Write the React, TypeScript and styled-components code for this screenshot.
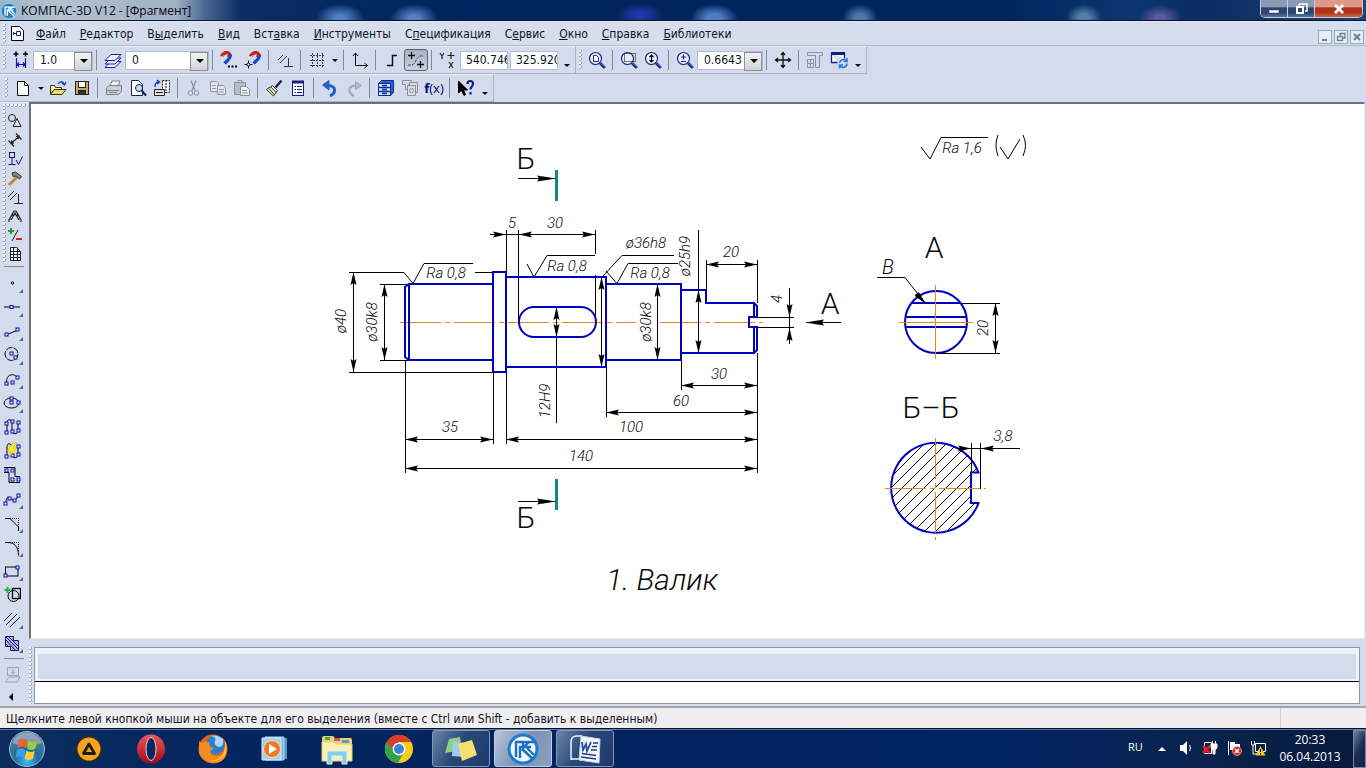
import React from "react";
import styled, { createGlobalStyle, css } from "styled-components";

const UI = `"DejaVu Sans Condensed", "DejaVu Sans", "Noto Sans", sans-serif`;
const SEGOE = `"Open Sans", "Noto Sans", sans-serif`;
const GOST = `Roboto, "Liberation Sans", sans-serif`;

const NAVY = "#00006e";
const BLUE = "#0000c0";
const ORANGE = "#dc8c1c";

const Global = createGlobalStyle`
  * { box-sizing: border-box; }
  body { margin: 0; background: #d3dbec; font-family: ${UI}; font-size: 12px; color: #10141c; }
  button, input, select { font: inherit; color: inherit; margin: 0; padding: 0; border: 0; background: none; border-radius: 0; outline: none; }
  svg { display: block; }
`;

/* ---------- window frame ---------- */

const Screen = styled.div`
  display: flex;
  flex-direction: column;
  height: 100vh;
  overflow: hidden;
`;

const TitleBar = styled.header`
  flex: none;
  display: flex;
  align-items: flex-start;
  height: 22px;
  padding-right: 3px;
  border-bottom: 1px solid #dfe8f6;
  box-shadow: inset 0 -1px #0a1226;
  background:
    linear-gradient(90deg, #9db4c9 0, #b3c2d0 60px, rgba(168, 184, 202, 0.95) 175px, rgba(110, 140, 178, 0.6) 205px, transparent 240px),
    radial-gradient(ellipse 24px 14px at 340px 18px, #4f81c6 20%, transparent 100%),
    radial-gradient(ellipse 24px 14px at 414px 18px, #5580c2 20%, transparent 100%),
    radial-gradient(ellipse 24px 12px at 640px 15px, #2436a8 20%, transparent 100%),
    radial-gradient(ellipse 24px 14px at 714px 18px, #4c7cc4 30%, transparent 100%),
    radial-gradient(ellipse 18px 14px at 860px 18px, #4e78a8 30%, transparent 100%),
    radial-gradient(ellipse 18px 14px at 1084px 18px, #4e7fa8 30%, transparent 100%),
    radial-gradient(ellipse 22px 13px at 1160px 18px, #5d5aa4 20%, transparent 100%),
    linear-gradient(90deg, #1d4270 0, #0a2c63 260px, #02245e 460px, #02245c 1000px, #0d3570 1130px, #0a2c62 1200px, #24426f 100%);
`;

const TitleText = styled.h1`
  flex: 1;
  display: flex;
  align-items: center;
  gap: 3px;
  height: 21px;
  margin: 0;
  font: 400 12px/20px ${SEGOE};
  color: #05070c;
`;

const CaptionGroup = styled.div`
  display: flex;
  height: 18px;
  border: 1px solid #c2cddd;
  border-top: 0;
  border-radius: 0 0 5px 5px;
  overflow: hidden;
`;

const CaptionButton = styled.button<{ $close?: boolean }>`
  display: flex;
  align-items: center;
  justify-content: center;
  width: ${(p) => (p.$close ? 47 : 27)}px;
  border-right: ${(p) => (p.$close ? 0 : 1)}px solid #c2cddd;
  background: ${(p) =>
    p.$close
      ? "linear-gradient(#dd9a8c 0 40%, #bc2f14 46%, #a9301c 70%, #d2644a)"
      : "linear-gradient(#8b9ab5 0 40%, #31476f 46%, #2b4672 75%, #57759f)"};
`;

const MenuBar = styled.nav`
  flex: none;
  display: flex;
  align-items: center;
  height: 24px;
  padding: 0 2px 0 0;
  background: #d6deee;
  border-bottom: 1px solid #b3b9c6;
`;

const MenuList = styled.div`
  flex: 1;
  display: flex;
  gap: 14px;
  padding-left: 12px;
`;

const MenuItem = styled.button`
  line-height: 22px;
  white-space: nowrap;
`;

const DocButtons = styled.div`
  display: flex;
  gap: 2px;
  padding-top: 6px;
`;

const DocButton = styled.button`
  width: 14px;
  height: 14px;
  border: 1px solid #93a9ba;
  background: #e6eef6;
`;

/* ---------- toolbars ---------- */

const ToolRow = styled.div`
  flex: none;
  display: flex;
  height: 28px;
`;

const Toolbar = styled.div<{ $wide?: boolean }>`
  display: flex;
  align-items: center;
  padding: 0 1px 0 ${(p) => (p.$wide ? 2 : 0)}px;
  border: 1px solid #e9eef7;
  border-right-color: #aeb5c3;
  border-bottom-color: #aeb5c3;
  border-left: 0;
`;

const Grip = styled.span<{ $row?: boolean }>`
  flex: none;
  ${(p) =>
    p.$row
      ? css`width: 24px; height: 3px; margin-left: 2px;`
      : css`width: 3px; height: 20px; margin: 0 3px;`}
  background-image: radial-gradient(circle at 1px 1px, #f6f8fc 1px, #9aa5ba 1px 2px, transparent 2px);
  background-size: 4px 4px;
`;

const Tool = styled.button<{ $pressed?: boolean }>`
  flex: none;
  display: flex;
  align-items: center;
  justify-content: center;
  width: 24px;
  height: 22px;
  ${(p) =>
    p.$pressed &&
    css`
      border: 1px solid #5c6473;
      border-radius: 3px;
      background: linear-gradient(#aab2c2, #c9d0de);
    `}
`;

const Caret = styled.button<{ $low?: boolean }>`
  display: flex;
  justify-content: center;
  align-items: center;
  width: ${(p) => (p.$low ? 14 : 11)}px;
  height: 20px;
  padding-top: ${(p) => (p.$low ? 10 : 0)}px;
  &::after {
    content: "";
    border: 3px solid transparent;
    border-top-color: #05070c;
    border-bottom: 0;
  }
`;

const Sep = styled.span`
  flex: none;
  width: 1px;
  height: 20px;
  margin: 0 4px 0 3px;
  background: #8089a0;
`;

const ComboWrap = styled.label<{ $w: number }>`
  position: relative;
  display: block;
  width: ${(p) => p.$w}px;
  height: 19px;
  border: 1px solid #b4bccb;
  background: #fff;
  select {
    appearance: none;
    width: 100%;
    height: 17px;
    padding-left: 6px;
    font: 400 12px/17px ${UI};
  }
  &::after {
    content: "";
    position: absolute;
    right: 4px;
    top: 7px;
    border: 4px solid transparent;
    border-top-color: #000;
    border-bottom: 0;
    pointer-events: none;
  }
  &::before {
    content: "";
    position: absolute;
    right: 0;
    top: 0;
    width: 16px;
    height: 17px;
    border: 1px solid #8a8f98;
    background: linear-gradient(#f4f4f4, #cfd2d6);
    pointer-events: none;
  }
`;

const CoordInput = styled.input`
  width: 48px;
  height: 19px;
  margin-right: 2px;
  padding-left: 5px;
  border: 1px solid #b4bccb;
  background: #fff;
  font: 400 12px/17px ${UI};
`;

const Fx = styled.span`
  font: 400 13px/20px ${SEGOE};
  color: ${NAVY};
  b { font-weight: 700; }
`;

/* ---------- body ---------- */

const Body = styled.div`
  flex: 1;
  min-height: 0;
  display: flex;
`;

const SideBar = styled.aside`
  flex: none;
  display: flex;
  flex-direction: column;
  align-items: flex-start;
  width: 29px;
  padding: 1px 2px 0 1px;
  border-top: 1px solid #eef2f9;
`;

const SideGroup = styled.div<{ $panel?: boolean }>`
  display: flex;
  flex-direction: column;
  ${(p) =>
    p.$panel &&
    css`
      margin-left: 2px;
      padding: 4px 0 0 1px;
      background: radial-gradient(circle at 1px 1px, #f6f8fc 1px, #9aa5ba 1px 2px, transparent 2px) 0 0 / 4px 4px repeat-y;
    `}
`;

const SideTool = styled.button<{ $tall?: boolean }>`
  position: relative;
  display: flex;
  align-items: center;
  justify-content: center;
  width: 22px;
  height: ${(p) => (p.$tall ? 24 : 19)}px;
`;

const Corner = styled.span`
  position: absolute;
  right: 0;
  bottom: 2px;
  border-left: 4px solid transparent;
  border-bottom: 4px solid #5d6678;
`;

const SideSep = styled.span`
  width: 20px;
  height: 1px;
  margin: 3px 0 4px 3px;
  background: #7e889c;
`;

const Work = styled.div`
  flex: 1;
  min-width: 0;
  display: flex;
  flex-direction: column;
`;

const Canvas = styled.main`
  flex: 1;
  min-height: 0;
  overflow: hidden;
  margin-right: 1px;
  border-top: 2px solid #6f7078;
  border-left: 2px solid #6f7078;
  border-right: 1px solid #e3e7ef;
  border-bottom: 1px solid #e3e7ef;
  background: #fff;
`;

const PropPanel = styled.section`
  flex: none;
  display: flex;
  gap: 2px;
  padding: 8px 6px 2px 0;
`;

const PropGrip = styled.span`
  width: 3px;
  background: radial-gradient(circle at 1px 1px, #f6f8fc 1px, #9aa5ba 1px 2px, transparent 2px) 0 0 / 4px 4px repeat-y;
`;

const PropBoxes = styled.div`
  flex: 1;
  border: 1px solid #8f95a1;
`;

const PropArea = styled.div`
  height: 33px;
  border: 3px solid #eef1f8;
  border-top-width: 6px;
  border-bottom-width: 2px;
  background: #d3dbec;
`;

const PropField = styled.input`
  display: block;
  width: 100%;
  height: 22px;
  border-top: 1px solid #000;
  background: #fff;
`;

const StatusBar = styled.footer`
  flex: none;
  display: flex;
  height: 22px;
  border-top: 2px solid #a3a6ae;
  background: #f0eeee;
  line-height: 22px;
  white-space: nowrap;
`;

const StatusText = styled.span`
  flex: 1;
  padding-left: 6px;
`;

const StatusCell = styled.span`
  width: 86px;
  border-left: 1px solid #d3d0d0;
`;

/* ---------- taskbar ---------- */

const TaskBar = styled.div`
  flex: none;
  display: flex;
  align-items: stretch;
  height: 40px;
  border-top: 1px solid #0a1020;
  box-shadow: inset 0 1px #5c7ba8;
  background: linear-gradient(90deg, #0b2e5e 0, #04265e 200px, #02235e 700px, #022463 1000px, #08244e 1200px, #07193a 100%);
`;

const TaskItem = styled.button<{ $state?: "start" | "open" | "active" }>`
  display: flex;
  align-items: center;
  justify-content: center;
  width: ${(p) => (p.$state === "start" ? 54 : 58)}px;
  margin: 1px 2px;
  ${(p) =>
    p.$state === "start" &&
    css`
      margin: 1px 4px 1px 0;
    `}
  border-radius: 3px;
  ${(p) =>
    p.$state === "open" &&
    css`
      border: 1px solid #8297b8;
      background: linear-gradient(120deg, #6c84a8, #2a4878 45%, #1c3a6c);
    `}
  ${(p) =>
    p.$state === "active" &&
    css`
      border: 1px solid #c3d0e2;
      background: linear-gradient(120deg, #b9c6da, #7d93b5 50%, #8ba0bf);
    `}
`;

const Tray = styled.div`
  display: flex;
  align-items: center;
  margin-left: auto;
  padding: 0 3px 2px 0;
  color: #fff;
  font: 400 12px/17px ${SEGOE};
`;

const Lang = styled.span`
  width: 22px;
  padding-bottom: 3px;
  font-size: 11px;
`;

const TrayIcon = styled.button`
  display: flex;
  justify-content: center;
  width: 24px;
`;

const Clock = styled.time`
  width: 80px;
  text-align: center;
`;

const ShowDesktop = styled.button`
  width: 13px;
  margin-top: 1px;
  border: 1px solid #7188ac;
  background: linear-gradient(120deg, #6b7f9f, #1c2f52 50%, #12213f);
`;

/* ---------- icon drawings ---------- */

const Ic = ({ children, c = "#000", w = 18, f = "none" }: { children: React.ReactNode; c?: string; w?: number; f?: string }) => (
  <svg width={w} height={w} viewBox="0 0 18 18" fill={f} stroke={c} strokeWidth={1} aria-hidden="true">
    {children}
  </svg>
);

const Nodes = ({ at }: { at: [number, number][] }) => (
  <>
    {at.map(([x, y]) => (
      <rect key={`${x}-${y}`} x={x - 1.5} y={y - 1.5} width={3} height={3} fill="#dfe6f5" stroke="#1010b4" strokeWidth={1} />
    ))}
  </>
);

const Magnet = ({ x = 0 }: { x?: number }) => (
  <g transform={`translate(${x} 0)`} fill="none">
    <path d="M1.500 5.500C5 -.5 12 1 8.500 6.500" stroke="#cc1f1f" strokeWidth={3.4} />
    <path d="M10.500 3.500C11 7 8 9 4.500 12.500" stroke="#2046c8" strokeWidth={3.2} />
    <path d="M1 7l2.500-2.500M3 12.500l2.500 1.500" stroke="#dfe6f5" strokeWidth={1} />
  </g>
);

const Lens = ({ children }: { children?: React.ReactNode }) => (
  <>
    <circle cx="7.500" cy="7.500" r="6" fill="#eaf0fb" stroke="#1c2a86" strokeWidth={1.2} />
    <path d="M12 12l5 5" stroke="#2b4fae" strokeWidth={3} />
    <path d="M11.500 12.500l4.500 4.500" stroke="#101a60" />
    {children}
  </>
);

const icons = {
  snapStep: (
    <Ic c={NAVY}>
      <path d="M4 .5v5M1.500 3h5M13.500 .5v5M11 3h5" stroke="#000" strokeWidth={1.5} />
      <path d="M4.500 7v10M13.500 7v10M5 13.500h8M7 11.500l-2 2 2 2M11 11.500l2 2-2 2" stroke="#1414b4" strokeWidth={1.2} />
    </Ic>
  ),
  layers: (
    <Ic c="#1c1ca8" f="#eef2fb">
      <path d="M1 16.500h10l6-6H7z" /><path d="M1 13h10l6-6H7z" /><path d="M1 9.500h10l6-6H7z" />
    </Ic>
  ),
  magnetDots: <Ic><Magnet /><path d="M8 15.500h2M11.500 15.500h2M15 15.500h2" strokeWidth={2} /></Ic>,
  magnetPoint: <Ic><Magnet x={5} /><path d="M4.500 9.500v8M0.500 13.500h8" /><circle cx="4.500" cy="13.500" r="1.500" fill="#fff" /></Ic>,
  ortho: <Ic c="#333"><path d="M2 9l5-5M4 12l7-7M12.500 7v8M8 15.500h9" /></Ic>,
  grid: <Ic c="#3a3f4a"><path d="M4.500 2v14M9.500 2v14M14.500 2v14M2 4.500h15M2 9.500h15M2 14.500h15" strokeDasharray="2 1" /></Ic>,
  axes: <Ic c="#111"><path d="M4.500 2v12.500h12M2 5l2.500-3L7 5M13.500 12l3 2.500-3 2.500" /></Ic>,
  step: <Ic c="#111"><path d="M4 14.500h5.500v-10H14" strokeWidth={1.5} /></Ic>,
  curvePt: <Ic c="#111"><path d="M4.500 1v7M1 4.500h7M13.500 10v7M10 13.500h7" strokeWidth={1.3} /><path d="M1 14h4c4-1 4-8 8-9h4" stroke="#2b4fae" strokeDasharray="3 1" /></Ic>,
  yx: <Ic c="#222"><path d="M1 2l2 3 2-3M3 5v3M12 1v7M8.500 4.500h7M10 11l4 6M14 11l-4 6" strokeWidth={1.2} /></Ic>,
  zoomDoc: <Ic><Lens><path d="M5.500 4.500h3l2 2v4h-5z" fill="#fff" stroke="#1c2a86" /></Lens></Ic>,
  zoomArea: <Ic><Lens><rect x="4.500" y="2.500" width="11" height="8" strokeDasharray="1 1" fill="none" /></Lens></Ic>,
  zoomY: <Ic><Lens><path d="M7.500 4v7M5.500 6l2-2 2 2M5.500 9l2 2 2-2" strokeWidth={1.2} /></Lens></Ic>,
  zoomPM: <Ic><Lens><path d="M7.500 3.500v5M5 6h5M5 10.500h5" stroke="#1c2a86" strokeWidth={1.2} /></Lens></Ic>,
  pan: <Ic c="#111"><path d="M9 1.500v15M1.500 9h15M7 4l2-2.500L11 4M7 14l2 2.500 2-2.500M4 7L1.500 9 4 11M14 7l2.500 2-2.500 2" strokeWidth={1.3} /></Ic>,
  redraw: <Ic c="#8b919e"><path d="M1.500 1.500h15v3h-3v12h-4v-12h-8zM1.500 8.500h6v8h-6zM1.500 12.500h6M4.500 8.500v8" /></Ic>,
  refresh: <Ic c="#15207e"><path d="M1.500 2.500h13v5M1.500 2.500v9h6" fill="#fff" strokeWidth={1.3} /><path d="M1 2.500h14" strokeWidth={3} /><path d="M9.500 12a4 4 0 017-2M17 12.500a4 4 0 01-7 2.500M17 7v3.500H13.500M9.500 17.500V14H13" stroke="#2a78d8" strokeWidth={1.6} /></Ic>,
  newDoc: <Ic c="#111" f="#fff"><path d="M3.500 2.500h7l4 4v10h-11z" /><path d="M10.500 2.500v4h4" fill="none" /></Ic>,
  open: <Ic c="#3a3410"><path d="M1.500 15.500v-9h4l1 2h6v2" fill="#fff6b0" /><path d="M1.500 15.500l3.500-5h12l-4 5z" fill="#e8d873" /><path d="M9 5c2-3 5-3 6 0M13 4l2.500 2L17 3" stroke="#1a3fb4" strokeWidth={1.3} /></Ic>,
  save: <Ic c="#222"><rect x="2.500" y="2.500" width="13" height="13" fill="#c8a85a" /><rect x="5.500" y="2.500" width="7" height="6" fill="#fff" /><rect x="5.500" y="11.500" width="7" height="4" fill="#333" /></Ic>,
  print: <Ic c="#7d828d" f="#c9ced9"><path d="M5 7l2-5h8l-2 5" fill="#eef0f5" /><path d="M1.500 8.500l3-2h12v6l-3 3h-12z" /><path d="M2 11.500h12M4 13.500h8" /></Ic>,
  preview: <Ic c="#1b2350"><path d="M2.500 1.500h7l4 4v11h-11z" fill="#fff" /><circle cx="10" cy="9" r="3.500" fill="#c7e0f6" /><path d="M12.500 11.500l4.500 5" strokeWidth={2.2} /></Ic>,
  pages: <Ic c="#222"><path d="M9.500 1.500h7v12h-7zM13 1v13" fill="#f2f4f8" strokeDasharray="2 1" /><path d="M1.500 10.500h10v6h-10z" fill="#e3e3e3" /><path d="M3 13.500h7" /><path d="M2 8c0-4 1-5 4-5M4 1l2.500 2L4 5" stroke="#1a3fb4" strokeWidth={1.5} /></Ic>,
  cut: <Ic c="#8b919e"><path d="M6 1.500l4 10M11 1.500l-4 10" strokeWidth={1.3} /><circle cx="5.500" cy="14" r="2.300" /><circle cx="11.500" cy="14" r="2.300" /></Ic>,
  copy: <Ic c="#9095a1" f="#e3e7ef"><path d="M1.500 2.500h6l2 2v8h-8z" /><path d="M8.500 6.500h6l2 2v7h-8z" /><path d="M3 6.500h4M3 9.500h4M10 10.500h5M10 13h5" /></Ic>,
  paste: <Ic c="#8b919e"><rect x="1.500" y="3.500" width="11" height="12" fill="#b9beca" /><path d="M5 3.500v-2h4v2" /><path d="M7.500 7.500h6l3 3v6h-9z" fill="#eef0f5" /><path d="M9 11.500h5M9 14h6" /></Ic>,
  brush: <Ic c="#1b2350"><path d="M16.500 1.500l-6 7" strokeWidth={2.4} /><path d="M1.500 10.500l6-4 5 5-4 5.500z" fill="#f0e8b8" stroke="#333" /><path d="M4 9.500l5 6M6 8l5 5.500" stroke="#333" /></Ic>,
  props: <Ic c="#15207e"><rect x="3.500" y="2.500" width="11" height="14" fill="#fff" /><path d="M3 3h12" strokeWidth={3} /><path d="M5.500 7.500h1.500M8 7.500h5M5.500 10.500h1.500M8 10.500h5M5.500 13.500h1.500M8 13.500h5" /></Ic>,
  undo: <Ic c="#2360c8"><path d="M9 17c6-3 7-10-2-10.500" strokeWidth={3} /><path d="M8 1.500v9.500L1.500 6z" fill="#2360c8" /></Ic>,
  redo: <Ic c="#9ea4b1"><path d="M9 17c-6-3-7-10 2-10.500" strokeWidth={2} /><path d="M10.500 2.500v8l6-4z" fill="#b4bac6" /></Ic>,
  manager: <Ic c="#0a2c9c"><path d="M1.500 4.500l3-3h12v12l-3 3h-12z" fill="#2a62c4" /><rect x="1.500" y="4.500" width="12" height="12" fill="#d8eafc" /><path d="M1.500 8.500h12M1.500 12.500h12M5 6.500h5M5 10.500h5M5 14.500h5" strokeWidth={1.3} /></Ic>,
  vars: <Ic c="#8b8f98" f="#d9dce4"><path d="M1.500 1.500h9v4h-3v5h-3v-5h-3z" /><path d="M8.500 3.500h8v10h-8z" /><path d="M6.500 6.500h8v10h-8z" /><circle cx="10.500" cy="11.500" r="2" /></Ic>,
  help: <Ic c="#000"><path d="M1.500 2v12l3-2.500 2.500 5 1.500-1-2-4.500h4z" fill="#000" /><path d="M10.500 5c0-4 6-4 5.500 0 0 2.500-2.500 2.500-2.500 5.500M13.500 13v2.500" stroke="#15207e" strokeWidth={2.2} /></Ic>,
};

const ToolBtn = ({ label, icon, pressed }: { label: string; icon: keyof typeof icons; pressed?: boolean }) => (
  <Tool type="button" aria-label={label} $pressed={pressed}>{icons[icon]}</Tool>
);

const Combo = ({ label, value, w }: { label: string; value: string; w: number }) => (
  <ComboWrap $w={w}>
    <select aria-label={label} defaultValue={value}><option>{value}</option></select>
  </ComboWrap>
);

/* compact panel: groups of commands */
const panelIcons: [string, React.ReactNode][] = [
  ["Геометрия", <Ic c="#222"><circle cx="6" cy="6" r="3.500" /><path d="M7 14.500h8l-4-8z" /></Ic>],
  ["Размеры", <Ic c="#222"><path d="M5.500 12l7-6M2.500 9.500l5.500 6M10 2.500l5.500 6M8 12l-3 .5 1-3M10 5.500l3-.5-1 3" strokeWidth={1.2} /></Ic>],
  ["Обозначения", <Ic c="#15155c"><rect x="3.500" y="2.500" width="5" height="5" /><path d="M6 8v6M2.500 14.500h7M10 10l2.500 4.500 4-8" /></Ic>],
  ["Редактирование", <Ic c="#6b4a10"><path d="M3 16l8-8" stroke="#c08a2c" strokeWidth={3} /><path d="M6 4l3.500-1 6 4.500-2 2.500-3.500-3-3 .5z" fill="#8f8a80" stroke="#333" /></Ic>],
  ["Параметризация", <Ic c="#222"><path d="M2 9l6-6M4 12l7-7M12.500 6v9M8 15.500h9" /></Ic>],
  ["Измерения", <Ic c="#222"><path d="M3 15v-2l5-9h2l5 9v2M5 13l4-7 4 7M6 8.500c2-1 4-1 6 0" strokeWidth={1.2} /></Ic>],
  ["Выделение", <Ic><path d="M5 2v6M2 5h6" stroke="#13a03a" strokeWidth={2} /><path d="M6 15l6-11" stroke="#222" /><path d="M10 13h6" stroke="#d8202a" strokeWidth={2} /></Ic>],
  ["Спецификация", <Ic c="#222"><path d="M4.500 2.500h6l4 4v9h-10zM4.500 6.500h10M4.500 9.500h10M4.500 12.500h10M7.500 2.500v13M11.500 2.500v13" fill="#f2f4f8" /></Ic>],
];

const geometryIcons: [string, React.ReactNode, boolean][] = [
  ["Точка", <Ic><circle cx="9.500" cy="9" r="1.200" /></Ic>, true],
  ["Вспомогательная прямая", <Ic><path d="M1 9h16" /><Nodes at={[[8.5, 9]]} /></Ic>, true],
  ["Отрезок", <Ic><path d="M3 13L15 8" /><Nodes at={[[3.5, 12.5], [14.5, 7.5]]} /></Ic>, true],
  ["Окружность", <Ic><circle cx="8.500" cy="8" r="6.500" strokeDasharray="7 1" /><Nodes at={[[8.5, 7.5], [12.5, 11.5]]} /></Ic>, true],
  ["Дуга", <Ic><path d="M3.500 13C3 3 12 3 14.500 8" /><Nodes at={[[3.5, 13.5], [9.5, 12.5], [14.5, 7.5]]} /></Ic>, true],
  ["Эллипс", <Ic><ellipse cx="8.500" cy="9" rx="7.500" ry="5" /><Nodes at={[[8.5, 8.5], [8.5, 4.5], [15.5, 8.5]]} /></Ic>, true],
  ["Непрерывный ввод", <Ic><path d="M4 14V5C4 0 9 1 9 6v6c0 5 6 5 6 0V5" /><Nodes at={[[3.5, 14.5], [3.5, 5.5], [9.5, 3.5], [9.5, 13.5], [15.5, 4.5], [15.5, 12.5]]} /></Ic>, false],
  ["Линия", <Ic><path d="M4 14V5C4 0 9 1 9 6v6c0 5 6 5 6 0V5" /><Nodes at={[[3.5, 14.5], [9.5, 13.5], [15.5, 4.5], [15.5, 12.5]]} /><path d="M10 1L4 9h4l-2 6 8-9h-4l4-5z" fill="#ffee10" stroke="#b8a400" strokeWidth={0.5} /></Ic>, false],
  ["Мультилиния", <Ic><path d="M1 1.500h11v9H17M1 6.500h5v10H17" /><Nodes at={[[3.5, 4.5], [9.5, 4.5], [9.5, 13.5], [15.5, 13.5]]} /></Ic>, false],
  ["Кривая Безье", <Ic><path d="M3 13C3 5 7 7 9 9.500S14 10 15 5" /><Nodes at={[[2.5, 13.5], [6.5, 8.5], [11.5, 10.5], [15.5, 5.5]]} /></Ic>, true],
  ["Фаска", <Ic><path d="M2 4.500h5L15.500 13v4" /><path d="M7 4.500h8.500v9" strokeDasharray="1 1" /></Ic>, true],
  ["Скругление", <Ic><path d="M2 4.500h3c6 0 10.500 4 10.500 13" /><path d="M7 4.500h8.500v9" strokeDasharray="1 1" /></Ic>, true],
  ["Прямоугольник", <Ic><rect x="2.500" y="5" width="12.500" height="9" /><Nodes at={[[2.5, 13.5], [14.5, 5.5]]} /></Ic>, true],
  ["Собрать контур", <Ic><rect x="9.500" y="2.500" width="8" height="10" strokeWidth={1.3} /><circle cx="10.500" cy="10" r="5.500" /><path d="M4.500 1v6M1.500 4h6" stroke="#17b43a" strokeWidth={2} /></Ic>, false],
  ["Эквидистанта", <Ic c="#15155c"><path d="M1 11L9 3M3 15L14 4M7 17L17 7" /></Ic>, true],
  ["Штриховка", <Ic c="#15155c"><path d="M2.500 2.500h8v4h5v10h-8v-4h-5z" fill="#aab4e8" /><path d="M3 6l9 10M3 3l12 12M6 3l9 9M3 10l3 3" /></Ic>, true],
];

/* ---------- the technical drawing ---------- */

const DrawText = styled.text<{ $size?: number; $upright?: boolean }>`
  font-family: ${GOST};
  font-size: ${(p) => p.$size ?? 15}px;
  font-weight: 300;
  font-style: ${(p) => (p.$upright ? "normal" : "italic")};
  fill: #0c0c0c;
  text-anchor: middle;
`;

const angle = { r: 0, d: 90, l: 180, u: 270 };
const Arrow = ({ x, y, to, len = 13 }: { x: number; y: number; to: keyof typeof angle; len?: number }) => (
  <path d={`M0 0L${-len} -3L${-len + 2} 0L${-len} 3Z`} transform={`translate(${x} ${y}) rotate(${angle[to]})`} fill="#000" stroke="none" />
);

const HDim = ({ x1, x2, y }: { x1: number; x2: number; y: number }) => (
  <g><path d={`M${x1} ${y}H${x2}`} /><Arrow x={x1} y={y} to="l" /><Arrow x={x2} y={y} to="r" /></g>
);
const VDim = ({ x, y1, y2 }: { x: number; y1: number; y2: number }) => (
  <g><path d={`M${x} ${y1}V${y2}`} /><Arrow x={x} y={y1} to="u" /><Arrow x={x} y={y2} to="d" /></g>
);

const labels: [string, number, number][] = [
  ["5", 512, 228], ["30", 555, 228], ["Ra 0,8", 446, 278], ["Ra 0,8", 567, 271], ["Ra 0,8", 650, 278],
  ["ø36h8", 646, 248], ["20", 731, 257], ["35", 450, 432], ["100", 631, 432], ["60", 681, 406],
  ["30", 719, 379], ["140", 581, 461], ["Ra 1,6", 962, 153], ["3,8", 1003, 441],
];
const vLabels: [string, number, number][] = [
  ["ø40", 346, 321], ["ø30k8", 377, 322], ["12H9", 550, 401], ["ø30k8", 651, 322], ["ø25h9", 690, 256], ["4", 782, 299], ["20", 988, 328],
];

const hatch = Array.from({ length: 22 }, (_, i) => 795 + i * 11);

const Drawing = () => (
  <svg width="100%" height="100%" role="img" aria-label="Чертёж: валик">
    <defs>
      <clipPath id="section">
        <path d="M978.500 472.500A45 45 0 1 0 978.500 503H971V472.500Z" />
      </clipPath>
    </defs>
    <g transform="translate(-31 -104)" fill="none" stroke="#000" strokeWidth={1}>
      <path d="M400 322.500H636M660 322.500H763" stroke={ORANGE} strokeDasharray="41 4 5 4" />

      <path d="M349 272.500H404L413 283.500 424 263.500H473M475 272.500H493M349 372.500H493M380 284.500H408M380 360.500H408" />
      <path d="M405.500 361V473M493.500 372V444M506.500 367V444M506.500 230V277M518.500 230V322M595.500 230V254M595.500 275V322" />
      <path d="M527 264L534 277 547 255.500H595M602 277L622 255.500H674M606 271L617 283.500 628 263.500H678" />
      <path d="M606.500 367V417M681.500 360V390M757.500 260V303M757.500 353V473M706.500 260V290M698.500 230V290" />
      <path d="M757 317.500H794M757 327.500H794M789.500 288V344" />
      <path d="M490 234.500H518" />
      <Arrow x={506} y={234.5} to="r" />
      <HDim x1={519} x2={595} y={234.5} />
      <HDim x1={706} x2={757} y={264.5} />
      <HDim x1={681} x2={757} y={385.5} />
      <HDim x1={606} x2={757} y={412.5} />
      <HDim x1={506} x2={757} y={439.5} />
      <HDim x1={405} x2={493} y={439.5} />
      <HDim x1={405} x2={757} y={468.5} />
      <VDim x={353.5} y1={272} y2={372} />
      <VDim x={384.5} y1={284} y2={360} />
      <VDim x={601.5} y1={277} y2={367} />
      <VDim x={657.5} y1={284} y2={360} />
      <VDim x={698.5} y1={290} y2={353} />
      <VDim x={556.5} y1={307} y2={337} />
      <path d="M556.500 337V423" />
      <Arrow x={789.5} y={317} to="d" />
      <Arrow x={789.5} y={328} to="u" />

      <g stroke={BLUE} strokeWidth={2}>
        <path d="M493 284H409L405 287V357L409 360H493M409 284V360" />
        <rect x={493} y={272} width={13} height={100} />
        <path d="M506 277H606V367H506M606 284H681V360H606" />
        <rect x={519} y={307} width={77} height={30} rx={15} />
        <path d="M681 290H706V303H754L757 306V317H749V327H757V350L754 353H681M754 303V317M754 327V353" />
      </g>

      <path d="M518 178.500H556M518 501.500H556M806 322.500H841" />
      <Arrow x={556} y={178.5} to="r" len={19} />
      <Arrow x={556} y={501.5} to="r" len={19} />
      <Arrow x={805} y={322.5} to="l" len={19} />
      <path d="M556.500 170V201M556.500 479V510" stroke="#0f8a8a" strokeWidth={3} />

      <path d="M921 147L930 159 941 137.500H988M1000 147L1008 159 1020 139M998 135Q994 145 998 156M1023 135Q1028 145 1023 156" />

      <path d="M935 303.500H1000M935 353.500H1000" />
      <g stroke={BLUE} strokeWidth={2}>
        <circle cx={936} cy={322} r={31} />
        <path d="M911 303H961M905 317H967M905 327H967" />
      </g>
      <path d="M899 322.500H973M935.500 285V359" stroke={ORANGE} />
      <path d="M877 277.500H905L925 303" />
      <path d="M925 303L915 295.500 918.500 292.500Z" fill="#000" />
      <VDim x={995.5} y1={303} y2={353} />

      <g clipPath="url(#section)">
        {hatch.map((x) => <path key={x} d={`M${x} 540L${x + 104} 436`} />)}
      </g>
      <path d="M978.500 472.500A45 45 0 1 0 978.500 503H971V472.500Z" stroke={BLUE} strokeWidth={2} />
      <path d="M885 488.500H986M935.500 438V540" stroke={ORANGE} strokeDasharray="41 4 5 4" />
      <path d="M957 448.500H1020M971.500 443V473M980.500 443V489" />
      <Arrow x={971} y={448.5} to="r" />
      <Arrow x={981} y={448.5} to="l" />
    </g>
    <g transform="translate(-31 -104)">
      {labels.map(([t, x, y]) => <DrawText key={`${t}${x}`} x={x} y={y}>{t}</DrawText>)}
      {vLabels.map(([t, x, y]) => <DrawText key={`${t}${x}`} transform={`translate(${x} ${y}) rotate(-90)`}>{t}</DrawText>)}
      <DrawText x={888} y={274} $size={20}>B</DrawText>
      <DrawText x={830} y={314} $size={30} $upright>А</DrawText>
      <DrawText x={934} y={258} $size={30} $upright>А</DrawText>
      <DrawText x={526} y={169} $size={30} $upright>Б</DrawText>
      <DrawText x={526} y={528} $size={30} $upright>Б</DrawText>
      <DrawText x={931} y={418} $size={30} $upright>Б–Б</DrawText>
      <DrawText x={662} y={590} $size={30}>1. Валик</DrawText>
    </g>
  </svg>
);

/* ---------- logos ---------- */

const Kompas = ({ size, light }: { size: number; light?: boolean }) => (
  <svg width={size} height={size} viewBox="0 0 32 32" aria-hidden="true">
    <circle cx="16" cy="16" r="14" fill={light ? "#f2f7fd" : "#1f7fcc"} stroke={light ? "#1c7bd0" : "#8cc4ee"} strokeWidth={light ? 3 : 2} />
    <g stroke={light ? "#1c6fc4" : "#fff"} strokeWidth="2.400" fill="none">
      <path d="M9 24V9h7v6l6-6h5M16 9h10" /><path d="M13 25V14h11M15 16l11 10M20 15l7 7" />
    </g>
  </svg>
);

const StartOrb = () => (
  <svg width="40" height="38" viewBox="0 0 40 38" aria-hidden="true">
    <defs>
      <radialGradient id="orb" cx="50%" cy="85%" r="75%"><stop offset="0" stopColor="#39c6ee" /><stop offset=".45" stopColor="#1c6aa4" /><stop offset="1" stopColor="#5d7f9c" /></radialGradient>
    </defs>
    <circle cx="20" cy="19" r="17.500" fill="url(#orb)" stroke="#9cb9d0" />
    <path d="M5 13a16 16 0 0130 0q-15 6-30 0z" fill="#fff" opacity=".3" />
    <path d="M12 10q4-3 8.500 0l-1.500 8q-4-3-8.500 0z" fill="#f0642c" />
    <path d="M21.500 10.500q4 3 9 0l-2 8q-4 3-8.500 0z" fill="#9ccc3c" />
    <path d="M10 20q4-3 8.500 0l-1.500 8q-4-3-8.500 0z" fill="#3c9ce8" />
    <path d="M19.500 20.500q4 3 8.500 0l-2 8q-4 3-8.500 0z" fill="#fccc3c" />
  </svg>
);

const taskIcons = {
  aimp: <svg width="28" height="28" viewBox="0 0 28 28"><circle cx="14" cy="14" r="12.500" fill="#f5a21c" stroke="#2a2a2a" strokeWidth="2" /><path d="M14 9L8.500 18.500h11z" fill="none" stroke="#1c1c1c" strokeWidth="2.800" strokeLinejoin="round" /></svg>,
  opera: <svg width="30" height="30" viewBox="0 0 30 30"><defs><linearGradient id="op" x2="0" y2="1"><stop offset="0" stopColor="#f0565a" /><stop offset="1" stopColor="#a00c14" /></linearGradient></defs><ellipse cx="15" cy="15" rx="14" ry="14.500" fill="url(#op)" /><ellipse cx="15" cy="15" rx="5" ry="11.500" fill="#052a60" stroke="#f6c9c9" /></svg>,
  firefox: <svg width="32" height="32" viewBox="0 0 32 32"><circle cx="16" cy="16" r="14.500" fill="#e8661c" /><circle cx="18" cy="12" r="9.500" fill="#2f7cc8" /><path d="M14 3q6 1 4 5t4 6q5 0 4-8Q20 1 14 3z" fill="#a9d8f6" /><path d="M2 8l3 2q4-3 8 0-2 2 1 4l3 1-4 3q1 6 8 5 6-1 7-9 4 10-5 15Q9 33 2 20z" fill="#f28c1e" /><path d="M28 8q4 9-1 15-6 7-15 5 10 0 14-7 3-6 2-13z" fill="#fcc83c" /></svg>,
  wmp: <svg width="30" height="28" viewBox="0 0 30 28"><path d="M8 3h19v21H8z" fill="#4f92cc" /><path d="M5 2h19v23H5z" fill="#7ab4e0" stroke="#b9dcf4" /><path d="M2 3h19v22H2z" fill="#a6cdea" stroke="#d8ecf8" /><circle cx="12" cy="14" r="8.500" fill="#ee7a24" stroke="#fbe0c4" /><path d="M9 9v10l8-5z" fill="#fff" /></svg>,
  explorer: <svg width="34" height="32" viewBox="0 0 34 32"><path d="M2 5q0-2 2-2h9l2 2h15q2 0 2 2v20H2z" fill="#e8cf78" /><path d="M5 4h5v3H5z" fill="#3cae4c" /><path d="M14 5h6v3h-6z" fill="#e05a4c" /><path d="M22 7h7v3h-7z" fill="#4c9ce0" /><path d="M2 9h12l2 2h16v17H2z" fill="#fbf0b4" stroke="#e8cf78" /><path d="M7 31V20q0-2 2-2h16q2 0 2 2v11h-5v-8H12v8z" fill="#86cdee" stroke="#d8f0fb" /></svg>,
  chrome: <svg width="30" height="30" viewBox="0 0 30 30"><circle cx="15" cy="15" r="14" fill="#f8cc1c" /><path d="M15 15L2.900 8A14 14 0 0127.100 8H15z" fill="#dc3c2c" /><path d="M15 15L2.900 8A14 14 0 0014 29l6-11z" fill="#2fa24a" /><path d="M15 8h12.100A14 14 0 002.900 8l6 8z" fill="#dc3c2c" /><circle cx="15" cy="15" r="6.500" fill="#fff" /><circle cx="15" cy="15" r="5" fill="#3a82dc" /></svg>,
  notes: <svg width="34" height="26" viewBox="0 0 34 26"><path d="M5 3l11-2 2 13-17 3z" fill="#8fd088" /><path d="M9 6l12 1-1 14-12-1z" fill="#9ccdf2" /><path d="M14 8l14-4 5 15-15 6z" fill="#f8e06c" /></svg>,
  word: <svg width="32" height="30" viewBox="0 0 32 30"><path d="M2 26V8q0-6 6-6h5" stroke="#eef4fc" strokeWidth="1.500" fill="none" /><path d="M2 25h8" stroke="#eef4fc" strokeWidth="1.500" /><path d="M12 2l19 3-1 24-20-3z" fill="#f2f6fc" stroke="#c2d4ea" /><path d="M13 8l1 8 3-6 1 7 4-9" stroke="#1d4f9e" strokeWidth="1.800" fill="none" /><path d="M24 9h5M23 12.500h5M22 16h6M13 19.500l14 2M12 23l15 2" stroke="#1d3f7e" strokeWidth="1.600" /></svg>,
};

const menus: [string, string, string][] = [
  ["", "Ф", "айл"], ["", "Р", "едактор"], ["В", "ы", "делить"], ["", "В", "ид"], ["Вст", "а", "вка"], ["", "И", "нструменты"],
  ["С", "п", "ецификация"], ["С", "е", "рвис"], ["", "О", "кно"], ["", "С", "правка"], ["", "Б", "иблиотеки"],
];

export default function App() {
  return (
    <Screen>
      <Global />
      <TitleBar>
        <TitleText><Kompas size={18} />КОМПАС-3D V12 - [Фрагмент]</TitleText>
        <CaptionGroup>
          <CaptionButton type="button" aria-label="Свернуть"><svg width="12" height="10"><path d="M1 6h10v3H1z" fill="#fff" stroke="#3a3f4a" strokeWidth=".5" /></svg></CaptionButton>
          <CaptionButton type="button" aria-label="Восстановить"><svg width="13" height="12"><path d="M4 1h8v7h-2M4 1v2" fill="none" stroke="#fff" strokeWidth="1.500" /><rect x="2" y="4" width="6" height="6" fill="none" stroke="#fff" strokeWidth="2" /></svg></CaptionButton>
          <CaptionButton type="button" $close aria-label="Закрыть"><svg width="12" height="10"><path d="M2 1l8 8M10 1l-8 8" stroke="#fff" strokeWidth="2.800" /></svg></CaptionButton>
        </CaptionGroup>
      </TitleBar>

      <MenuBar>
        <Grip />
        <svg width="15" height="17" viewBox="0 0 15 17" aria-hidden="true"><path d="M2.500 1.500h8l4 4v10h-12z" fill="#fff" stroke="#000" /><path d="M4 8.500h3M7.500 6.500h4v4h-4zM4.500 7v3" fill="none" stroke="#1414b4" /></svg>
        <MenuList>
          {menus.map(([a, u, b]) => <MenuItem type="button" key={u + b}>{a}<u>{u}</u>{b}</MenuItem>)}
        </MenuList>
        <DocButtons>
          <DocButton type="button" aria-label="Свернуть документ"><svg width="12" height="12"><path d="M3 9h5" stroke="#6b8396" strokeWidth="2" /></svg></DocButton>
          <DocButton type="button" aria-label="Восстановить документ"><svg width="12" height="12"><path d="M5 5V2.500h5V7H8M2.500 5.500h5v4h-5z" fill="none" stroke="#6b8396" strokeWidth="1.300" /></svg></DocButton>
          <DocButton type="button" aria-label="Закрыть документ"><svg width="12" height="12"><path d="M3 3l6 6M9 3l-6 6" stroke="#6b8396" strokeWidth="2" /></svg></DocButton>
        </DocButtons>
      </MenuBar>

      <ToolRow>
        <Toolbar>
          <Grip />
          <ToolBtn label="Шаг курсора" icon="snapStep" />
          <Combo label="Текущий шаг" value="1.0" w={60} />
          <Sep />
          <ToolBtn label="Слои" icon="layers" />
          <Combo label="Текущий слой" value="0" w={84} />
          <Sep />
          <ToolBtn label="Привязки" icon="magnetDots" />
          <ToolBtn label="Запретить привязки" icon="magnetPoint" />
          <Sep />
          <ToolBtn label="Параметрический режим" icon="ortho" />
          <Sep />
          <ToolBtn label="Сетка" icon="grid" />
          <Caret type="button" aria-label="Параметры сетки" />
          <Sep />
          <ToolBtn label="Система координат" icon="axes" />
          <Sep />
          <ToolBtn label="Ортогональное черчение" icon="step" />
          <ToolBtn label="Округление" icon="curvePt" pressed />
          <Sep />
          <ToolBtn label="Координаты" icon="yx" />
          <CoordInput aria-label="X" defaultValue="540.746" />
          <CoordInput aria-label="Y" defaultValue="325.920" />
          <Caret type="button" $low aria-label="Ещё" />
        </Toolbar>
        <Toolbar>
          <Grip />
          <ToolBtn label="Показать документ" icon="zoomDoc" />
          <Sep />
          <ToolBtn label="Увеличить рамкой" icon="zoomArea" />
          <ToolBtn label="Масштаб по высоте" icon="zoomY" />
          <Sep />
          <ToolBtn label="Приблизить" icon="zoomPM" />
          <Combo label="Масштаб" value="0.6643" w={66} />
          <Sep />
          <ToolBtn label="Сдвинуть" icon="pan" />
          <Sep />
          <ToolBtn label="Перестроить" icon="redraw" />
          <ToolBtn label="Обновить изображение" icon="refresh" />
          <Caret type="button" $low aria-label="Ещё" />
        </Toolbar>
      </ToolRow>

      <ToolRow>
        <Toolbar $wide>
          <Grip />
          <ToolBtn label="Создать" icon="newDoc" />
          <Caret type="button" aria-label="Тип документа" />
          <ToolBtn label="Открыть" icon="open" />
          <ToolBtn label="Сохранить" icon="save" />
          <Sep />
          <ToolBtn label="Печать" icon="print" />
          <ToolBtn label="Предварительный просмотр" icon="preview" />
          <ToolBtn label="Формат" icon="pages" />
          <Sep />
          <ToolBtn label="Вырезать" icon="cut" />
          <ToolBtn label="Копировать" icon="copy" />
          <ToolBtn label="Вставить" icon="paste" />
          <Sep />
          <ToolBtn label="Копировать свойства" icon="brush" />
          <ToolBtn label="Свойства" icon="props" />
          <Sep />
          <ToolBtn label="Отменить" icon="undo" />
          <ToolBtn label="Повторить" icon="redo" />
          <Sep />
          <ToolBtn label="Менеджер библиотек" icon="manager" />
          <ToolBtn label="Менеджер документа" icon="vars" />
          <Tool type="button" aria-label="Переменные"><Fx><b>f</b>(x)</Fx></Tool>
          <Sep />
          <ToolBtn label="Справка" icon="help" />
          <Caret type="button" $low aria-label="Ещё" />
        </Toolbar>
      </ToolRow>

      <Body>
        <SideBar>
          <Grip $row />
          <SideGroup $panel>
            {panelIcons.map(([label, icon]) => <SideTool type="button" key={label} aria-label={label}>{icon}</SideTool>)}
          </SideGroup>
          <SideSep />
          <SideGroup>
            {geometryIcons.map(([label, icon, more]) => (
              <SideTool type="button" $tall key={label} aria-label={label}>{icon}{more && <Corner />}</SideTool>
            ))}
          </SideGroup>
          <SideSep />
          <SideTool type="button" $tall aria-label="Библиотека">
            <Ic c="#9aa1b0"><path d="M4.500 1.500h11v8h-11zM10 3v5M8 6l2 2 2-2M3 15l3-4h11l-3 5H3z" /></Ic>
          </SideTool>
          <SideTool type="button" aria-label="Прокрутить"><svg width="8" height="8"><path d="M5 0v8L1 4z" fill="#000" /></svg></SideTool>
        </SideBar>
        <Work>
          <Canvas><Drawing /></Canvas>
          <PropPanel>
            <PropGrip />
            <PropBoxes>
              <PropArea />
              <PropField aria-label="Строка параметров" />
            </PropBoxes>
          </PropPanel>
        </Work>
      </Body>

      <StatusBar>
        <StatusText>Щелкните левой кнопкой мыши на объекте для его выделения (вместе с Ctrl или Shift - добавить к выделенным)</StatusText>
        <StatusCell />
      </StatusBar>

      <TaskBar>
        <TaskItem type="button" $state="start" aria-label="Пуск"><StartOrb /></TaskItem>
        <TaskItem type="button" aria-label="AIMP">{taskIcons.aimp}</TaskItem>
        <TaskItem type="button" aria-label="Opera">{taskIcons.opera}</TaskItem>
        <TaskItem type="button" aria-label="Firefox">{taskIcons.firefox}</TaskItem>
        <TaskItem type="button" aria-label="Проигрыватель">{taskIcons.wmp}</TaskItem>
        <TaskItem type="button" aria-label="Проводник">{taskIcons.explorer}</TaskItem>
        <TaskItem type="button" aria-label="Chrome">{taskIcons.chrome}</TaskItem>
        <TaskItem type="button" $state="open" aria-label="Записки">{taskIcons.notes}</TaskItem>
        <TaskItem type="button" $state="active" aria-label="КОМПАС-3D"><Kompas size={32} light /></TaskItem>
        <TaskItem type="button" $state="open" aria-label="Word">{taskIcons.word}</TaskItem>
        <Tray>
          <Lang>RU</Lang>
          <TrayIcon type="button" aria-label="Скрытые значки"><svg width="8" height="6"><path d="M0 6l4-4 4 4z" fill="#fff" /></svg></TrayIcon>
          <TrayIcon type="button" aria-label="Громкость"><svg width="14" height="14"><path d="M1 4h3l4-4v14l-4-4H1z" fill="#fff" /><path d="M10.500 4q2 3 0 6" stroke="#fff" fill="none" /></svg></TrayIcon>
          <TrayIcon type="button" aria-label="Питание"><svg width="16" height="16"><path d="M2.500 2.500h7v11h-7z" fill="none" stroke="#fff" /><path d="M9 4h6v4l-2 2v4h-2v-4L9 8zM10.500 1v3M13.500 1v3" fill="#fff" stroke="#fff" /><path d="M1 6l7 7M8 6l-7 7" stroke="#e01c1c" strokeWidth="2.500" /></svg></TrayIcon>
          <TrayIcon type="button" aria-label="Центр поддержки"><svg width="16" height="16"><path d="M2.500 1v14" stroke="#fff" /><path d="M4 2h5v2h5v6H4z" fill="#fff" /><circle cx="11" cy="11" r="4.500" fill="#d8281c" stroke="#f8d0c8" strokeWidth=".6" /><path d="M9 9l4 4M13 9l-4 4" stroke="#fff" strokeWidth="1.500" /></svg></TrayIcon>
          <TrayIcon type="button" aria-label="Сеть"><svg width="16" height="16"><path d="M5.500 3.500h10v8h-10z" fill="#0c2348" stroke="#fff" /><path d="M1.500 1v4h3V1M3 5v9h4" fill="none" stroke="#fff" /><path d="M10.500 6l5 9.500h-10z" fill="#f8c81c" /><path d="M10.500 9v3M10.500 13v1.500" stroke="#000" /></svg></TrayIcon>
          <Clock>20:33<br />06.04.2013</Clock>
        </Tray>
        <ShowDesktop type="button" aria-label="Показать рабочий стол" />
      </TaskBar>
    </Screen>
  );
}
